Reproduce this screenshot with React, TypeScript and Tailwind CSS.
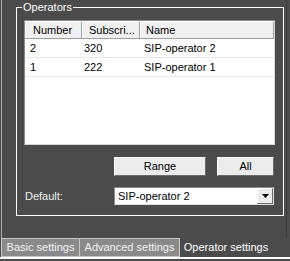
const font = { fontFamily: '"Liberation Sans", Arial, sans-serif' };

const rows = [
  { number: '2', sub: '320', name: 'SIP-operator 2' },
  { number: '1', sub: '222', name: 'SIP-operator 1' },
];

function Button({ label, width }: { label: string; width: string }) {
  return (
    <button
      className={`${width} h-[19px] bg-[#ececec] text-black leading-none border border-t-white border-l-white border-r-[#6a6a6a] border-b-[#6a6a6a] flex items-center justify-center`}
    >
      {label}
    </button>
  );
}

export default function App() {
  return (
    <div
      className="w-[290px] h-[261px] bg-[#4b4b4b] overflow-hidden flex flex-col text-[11px] text-white whitespace-nowrap select-none"
      style={font}
    >
      {/* ── Tab page ───────────────────────────────────────────── */}
      <div className="h-[238px] ml-[1px] w-[286px] border-l border-[#a8a8a8] border-r border-r-[#3c3c3c] pt-[7px] pl-[14px]">
        {/* Operators group box */}
        <div className="relative w-[268px] h-[209px] border border-white pt-[12px] pl-[7px]">
          <span className="absolute -top-[8px] left-[5px] px-[1px] bg-[#4b4b4b] leading-[14px]">Operators</span>

          {/* List */}
          <div className="w-[251px] h-[125px] bg-white border border-t-[#8a8a8a] border-l-[#8a8a8a] border-r-[#d8d8d8] border-b-[#d8d8d8] text-black">
            <div className="flex h-[18px] bg-[#f0f0f0] border-b border-[#a0a0a0]">
              <div className="w-[57px] pl-[7px] flex items-center border-r border-[#a0a0a0] border-l border-l-white border-t border-t-white">Number</div>
              <div className="w-[58px] pl-[6px] flex items-center border-r border-[#a0a0a0] border-l border-l-white border-t border-t-white">Subscri...</div>
              <div className="w-[134px] pl-[5px] flex items-center border-r border-[#a0a0a0] border-l border-l-white border-t border-t-white">Name</div>
            </div>
            {rows.map((r) => (
              <div key={r.number} className="flex h-[19px] border-b border-[#e8e8e8]">
                <div className="w-[57px] pl-[5px] flex items-center">{r.number}</div>
                <div className="w-[58px] pl-[2px] flex items-center">{r.sub}</div>
                <div className="w-[134px] pl-[4px] flex items-center">{r.name}</div>
              </div>
            ))}
          </div>

          {/* Buttons */}
          <div className="flex justify-end gap-[11px] w-[251px] pr-[1px] mt-[12px]">
            <Button label="Range" width="w-[92px]" />
            <Button label="All" width="w-[57px]" />
          </div>

          {/* Default */}
          <div className="flex items-center w-[251px] mt-[11px]">
            <span className="w-[90px] pl-[1px] text-[#f0f0f0]">Default:</span>
            <div className="w-[160px] h-[18px] bg-white border border-t-[#8a8a8a] border-l-[#8a8a8a] border-r-[#e0e0e0] border-b-[#e0e0e0] flex items-center text-black">
              <span className="flex-1 pl-[3px]">SIP-operator 2</span>
              <div className="w-[16px] h-full bg-[#ececec] border border-t-white border-l-white border-r-[#6a6a6a] border-b-[#6a6a6a] flex items-center justify-center">
                <svg width="7" height="4" viewBox="0 0 7 4">
                  <path d="M0 0h7L3.5 4z" fill="#000" />
                </svg>
              </div>
            </div>
          </div>
        </div>
      </div>

      {/* ── Tabs ───────────────────────────────────────────────── */}
      <div className="flex h-[21px] border-b-2 border-white">
        <div className="w-[79px] ml-[1px] bg-[#8a8a8a] border border-[#c8c8c8] flex items-center justify-center text-[#f4f4f4]">Basic settings</div>
        <div className="w-[100px] bg-[#8a8a8a] border border-l-0 border-[#c8c8c8] flex items-center justify-center text-[#f4f4f4]">Advanced settings</div>
        <div className="w-[92px] flex items-center justify-center">Operator settings</div>
      </div>
    </div>
  );
}
